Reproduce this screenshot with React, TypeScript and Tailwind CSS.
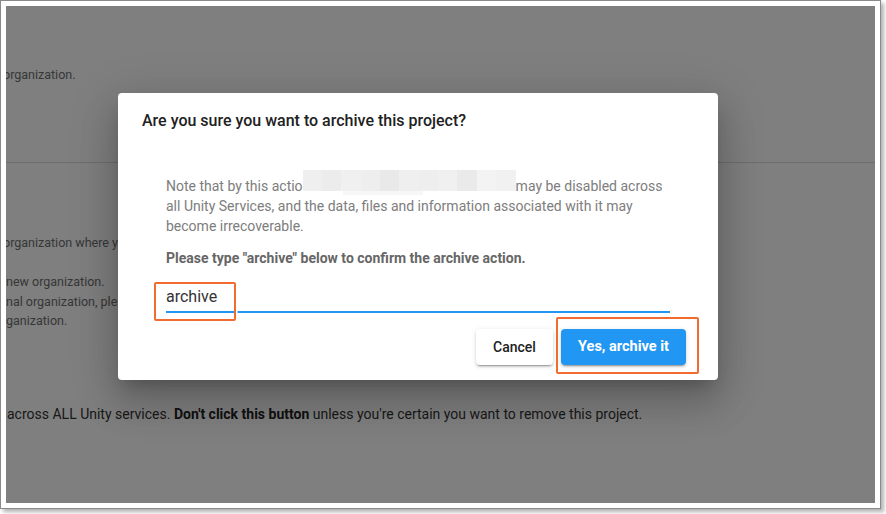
import React from 'react';

const redactShades = [
  'bg-[#efefef]',
  'bg-[#ececec]',
  'bg-[#f0f0f0]',
  'bg-[#eeeeee]',
  'bg-[#e9e9e9]',
  'bg-[#efefef]',
  'bg-[#eeeeee]',
  'bg-[#f0f0f0]',
  'bg-[#eaeaea]',
  'bg-[#f3f3f3]',
  'bg-[#f1f1f1]',
];

const Redacted: React.FC = () => (
  <span className="relative inline-block w-[213px] h-[12px]">
    <span className="absolute left-0 right-0 bottom-0 h-[21px] flex">
      {redactShades.map((c, i) => (
        <span key={i} className={`flex-1 ${c}`} />
      ))}
    </span>
    <span className="absolute left-[40px] w-[80px] bottom-[-4px] h-[4px] bg-[#f7f7f7]" />
  </span>
);

export default function App() {
  return (
    <div className="w-[886px] h-[514px] bg-white font-['Roboto',sans-serif]">
      <div className="w-[881px] h-[509px] border border-[#8a8a8a] bg-white p-[5px] shadow-[3px_3px_4px_rgba(0,0,0,0.3)]">
        <div className="relative w-full h-full overflow-hidden bg-white">
          {/* page behind the dialog */}
          <div className="flex flex-col text-[12.5px] text-[#6e6e6e]">
            <div className="mt-[60px] leading-[18px] -ml-[3px] whitespace-nowrap">organization.</div>
            <div className="mt-[78px] border-b border-[#dcdcdc]" />
            <div className="mt-[71px] leading-[18px] -ml-[3px] whitespace-nowrap">
              organization where you are a member.
            </div>
            <div className="mt-[20px] leading-[19.5px] whitespace-nowrap">
              <div>new organization.</div>
              <div>nal organization, please contact the</div>
              <div>ganization.</div>
            </div>
            <div className="mt-[73px] text-[14px] leading-[20px] text-[#333] whitespace-nowrap ml-[1px]">
              across ALL Unity services. <span className="font-bold text-[#222]">Don't click this button</span> unless
              you're certain you want to remove this project.
            </div>
          </div>

          {/* backdrop */}
          <div className="absolute inset-0 bg-black/50" />

          {/* dialog */}
          <div className="absolute left-[112px] top-[87px] w-[600px] h-[287px] rounded-[4px] bg-white px-6 pt-4 shadow-[0_11px_15px_-7px_rgba(0,0,0,0.2),0_24px_38px_3px_rgba(0,0,0,0.14),0_9px_46px_8px_rgba(0,0,0,0.12)]">
            <h2 className="text-[16px] leading-[24px] font-medium text-[#212121]">
              Are you sure you want to archive this project?
            </h2>

            <div className="mt-[43px] px-6">
              <p className="text-[14px] leading-[20px] text-[#7d7d7d]">
                Note that by this actio
                <Redacted />
                may be disabled across
                <br />
                all Unity Services, and the data, files and information associated with it may
                <br />
                become irrecoverable.
              </p>
              <p className="mt-[12px] text-[14px] leading-[20px] font-bold text-[#666]">
                Please type "archive" below to confirm the archive action.
              </p>
              <div className="mt-[12px] pt-[5px] pb-[2px] border-b-2 border-[#2196f3] text-[16px] leading-[24px] text-[#333]">
                archive
              </div>
            </div>

            <div className="mt-4 mr-2 flex justify-end gap-2">
              <button className="h-9 w-[77px] rounded-[4px] bg-white text-[14px] font-medium text-[#222] shadow-[0_3px_1px_-2px_rgba(0,0,0,0.2),0_2px_2px_0_rgba(0,0,0,0.14),0_1px_5px_0_rgba(0,0,0,0.12)]">
                Cancel
              </button>
              <button className="h-9 w-[125px] rounded-[4px] bg-[#2196f3] text-[14.5px] font-bold text-white shadow-[0_3px_1px_-2px_rgba(0,0,0,0.2),0_2px_2px_0_rgba(0,0,0,0.14),0_1px_5px_0_rgba(0,0,0,0.12)]">
                Yes, archive it
              </button>
            </div>

            {/* annotation boxes */}
            <div className="absolute left-[36px] top-[189px] w-[82px] h-[39px] rounded-[2px] border-2 border-[#f26b30] shadow-[0_0_0_1.5px_white]" />
            <div className="absolute left-[438px] top-[224px] w-[143px] h-[57px] rounded-[2px] border-2 border-[#f26b30]" />
          </div>
        </div>
      </div>
    </div>
  );
}
